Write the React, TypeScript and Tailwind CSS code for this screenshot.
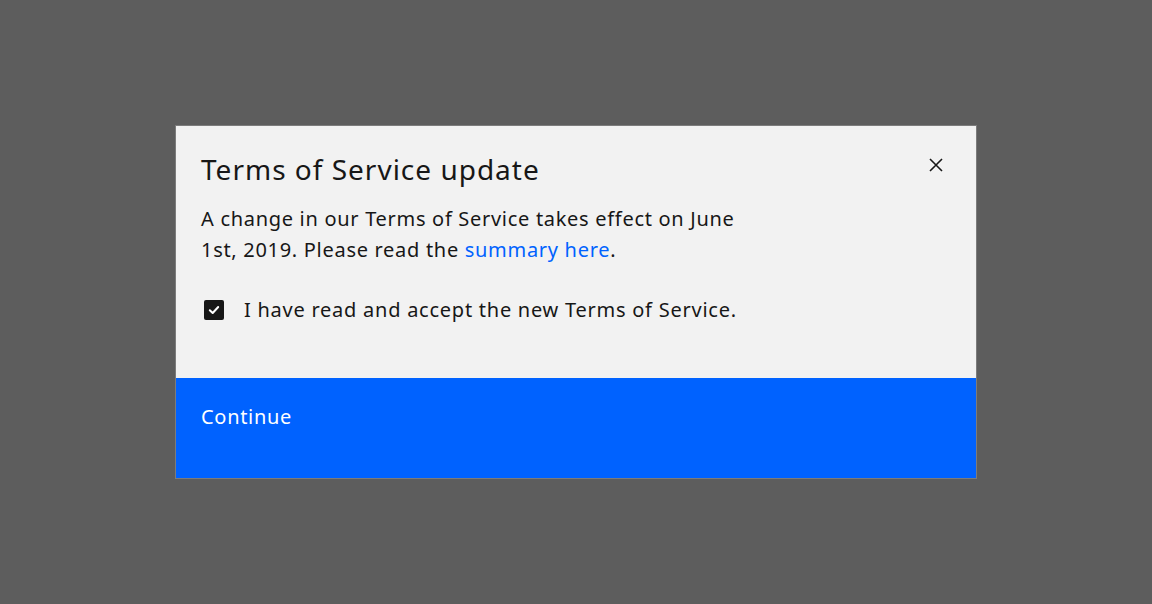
import React from "react";

export default function App() {
  return (
    <div
      className="w-full h-[604px] bg-[#5d5d5d] flex items-center justify-center"
      style={{ fontFamily: '"Noto Sans", "Open Sans", sans-serif' }}
    >
      <div className="w-[802px] border border-[#7c7c7c] bg-[#f2f2f2] flex flex-col">
        <div className="pl-[25px] pr-[32px] pt-[25px] pb-[53px]">
          <div className="flex items-start justify-between">
            <h1 className="text-[28px] leading-[36px] tracking-[1px] text-[#171717] font-normal">
              Terms of Service update
            </h1>
            <button className="mt-[6px] w-4 h-4 flex items-center justify-center text-[#171717]">
              <svg width="16" height="16" viewBox="0 0 16 16" fill="none">
                <path d="M2 2 L14 14 M14 2 L2 14" stroke="#171717" strokeWidth="1.6" />
              </svg>
            </button>
          </div>
          <p className="mt-[16px] text-[20px] leading-[31px] tracking-[0.7px] text-[#171717] w-[560px]">
            A change in our Terms of Service takes effect on June 1st, 2019. Please read the{" "}
            <a className="text-[#0062ff]">summary here</a>.
          </p>
          <label className="mt-[29px] flex items-center pl-[3px] text-[20px] leading-[31px] tracking-[0.75px] text-[#171717]">
            <span className="w-5 h-5 rounded-[2px] bg-[#171717] flex items-center justify-center shrink-0">
              <svg width="14" height="14" viewBox="0 0 14 14" fill="none">
                <path d="M2.8 7.2 L5.7 10 L11.2 4" stroke="#ffffff" strokeWidth="2" strokeLinecap="round" strokeLinejoin="round" />
              </svg>
            </span>
            <span className="ml-5">I have read and accept the new Terms of Service.</span>
          </label>
        </div>
        <button className="h-[100px] bg-[#0062ff] text-white text-left pl-[25px] pt-[24px] flex items-start text-[20px] leading-[30px] tracking-[0.7px]">
          Continue
        </button>
      </div>
    </div>
  );
}
